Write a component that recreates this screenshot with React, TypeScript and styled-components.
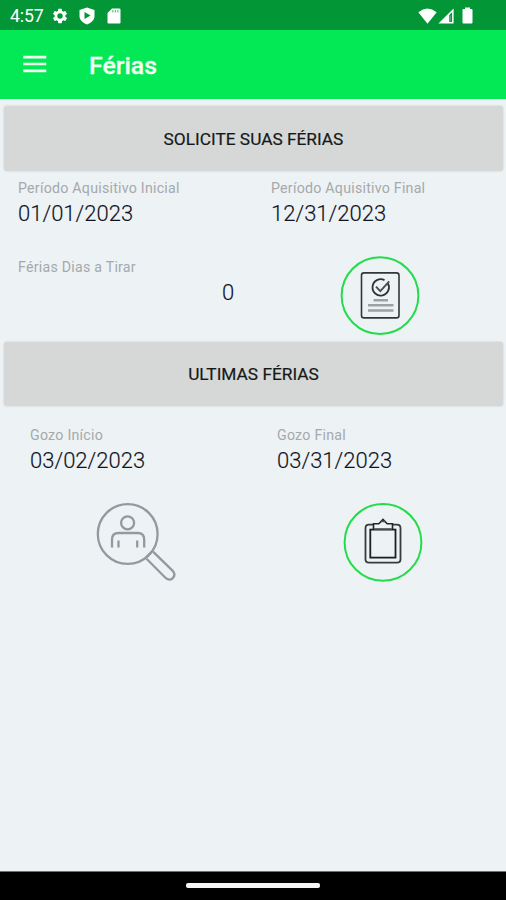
import React from "react";
import styled, { createGlobalStyle } from "styled-components";

const GlobalStyle = createGlobalStyle`
  * { box-sizing: border-box; }
  html, body { margin: 0; padding: 0; }
  body { font-family: Roboto, "Liberation Sans", sans-serif; background: #edf2f5; }
`;

const Screen = styled.div`
  width: 506px;
  height: 900px;
  display: flex;
  flex-direction: column;
  overflow: hidden;
  background: #edf2f5;
`;

const StatusBar = styled.header`
  flex: none;
  height: 30px;
  display: flex;
  align-items: center;
  justify-content: space-between;
  padding: 1px 33px 0 10px;
  background: #029636;
  color: #fff;
`;

const StatusGroup = styled.div<{ $gap: number }>`
  display: flex;
  align-items: center;
  gap: ${(p) => p.$gap}px;
  svg { display: block; }
`;

const Clock = styled.span`
  width: 33px;
  margin-right: -2px;
  font-size: 17.7px;
  line-height: 20px;
  letter-spacing: -0.1px;
  white-space: nowrap;
`;

const AppBar = styled.div`
  flex: none;
  height: 69px;
  display: flex;
  align-items: center;
  gap: 42px;
  padding: 2px 23px 0;
  background: #03e855;
  color: #f3fff2;
`;

const MenuButton = styled.button`
  display: flex;
  width: 24px;
  height: 22px;
  margin-top: -3px;
  padding: 0;
  border: 0;
  background: none;
`;

const Title = styled.h1`
  margin: 0;
  font-size: 24.8px;
  font-weight: 500;
  line-height: 30px;
  -webkit-text-stroke: 0.3px currentColor;
`;

const Content = styled.main`
  flex: 1;
  padding-top: 7px;
`;

const SectionButton = styled.button<{ $height: number }>`
  display: flex;
  align-items: center;
  justify-content: center;
  width: 499px;
  height: ${(p) => p.$height}px;
  margin: 0 0 0 4px;
  padding: 0;
  border: 0;
  border-radius: 3px;
  background: #d6d8d7;
  box-shadow: 0 0 2px rgba(90, 100, 100, 0.3);
  color: #161818;
  font: 400 17.3px/22px Roboto, sans-serif;
  -webkit-text-stroke: 0.2px currentColor;
`;

const FieldRow = styled.div<{ $columns: string; $left: number; $top: number; $height: number }>`
  display: grid;
  grid-template-columns: ${(p) => p.$columns};
  height: ${(p) => p.$height}px;
  padding: ${(p) => p.$top}px 0 0 ${(p) => p.$left}px;
`;

const Label = styled.div`
  height: 20px;
  font-size: 14.2px;
  line-height: 20px;
  letter-spacing: 0.24px;
  color: #a5a9ab;
`;

const Value = styled.div<{ $inset?: boolean }>`
  padding-left: ${(p) => (p.$inset ? "204px" : "0")};
  margin-top: 1px;
  height: 30px;
  font-size: 22px;
  font-weight: 300;
  line-height: 30px;
  color: #10131f;
  -webkit-text-stroke: 0.15px currentColor;
`;

const ActionRow = styled.div`
  display: flex;
  gap: 167px;
  padding: 22px 0 0 96px;
`;

const IconButton = styled.button<{ $lower?: boolean }>`
  width: 80px;
  height: 80px;
  margin-top: ${(p) => (p.$lower ? "1px" : "0")};
  padding: 0;
  border: 0;
  background: none;
  svg { display: block; }
`;

const NavigationBar = styled.footer`
  flex: none;
  height: 29px;
  display: flex;
  justify-content: center;
  align-items: center;
  padding-bottom: 1px;
  border-top: 1px solid #6d7173;
  background: #000;
`;

const HomeHandle = styled.div`
  width: 134px;
  height: 5px;
  border-radius: 2px;
  background: #f4f4f4;
`;

const GearIcon = () => (
  <svg width="18" height="18" viewBox="0 0 24 24" fill="#fff">
    <path d="M19.14 12.94c.04-.3.06-.61.06-.94s-.02-.64-.07-.94l2.03-1.58a.5.5 0 0 0 .12-.61l-1.92-3.32a.49.49 0 0 0-.59-.22l-2.39.96a7 7 0 0 0-1.62-.94l-.36-2.54a.48.48 0 0 0-.48-.41h-3.84a.47.47 0 0 0-.47.41l-.36 2.54c-.59.24-1.13.57-1.62.94l-2.39-.96a.48.48 0 0 0-.59.22L2.740 8.870a.47.47 0 0 0 .12.61l2.030 1.580a7 7 0 0 0 0 1.880l-2.030 1.580a.5.5 0 0 0-.12.61l1.920 3.320c.12.22.37.29.59.22l2.390-.96c.5.38 1.030.7 1.620.94l.36 2.540c.05.24.24.41.48.41h3.840c.24 0 .44-.17.47-.41l.36-2.540a7 7 0 0 0 1.620-.94l2.390.96c.22.08.47 0 .59-.22l1.920-3.320a.47.47 0 0 0-.12-.61zM12 15.600a3.600 3.600 0 1 1 0-7.200 3.600 3.600 0 0 1 0 7.200z" />
  </svg>
);

const ShieldIcon = () => (
  <svg width="16" height="18" viewBox="0 0 16 18">
    <path d="M8 .5 15.500 3v6c0 4-3 6.700-7.500 8.500C3.500 15.700.5 13 .5 9V3z" fill="#fff" />
    <path d="M5.500 4.900v7L11.500 8.400z" fill="#029636" />
  </svg>
);

const SdCardIcon = () => (
  <svg width="17" height="16" viewBox="-2 0 17 16">
    <path d="M5 .5h7.300q1.200 0 1.200 1.200v12.600q0 1.200-1.200 1.200H1.700q-1.200 0-1.200-1.200V5z" fill="#fff" />
    <path d="M5.900 2v2.500M8.400 2v2.500M10.900 2v2.500" stroke="#029636" strokeWidth="1.100" opacity=".65" />
  </svg>
);

const WifiIcon = () => (
  <svg width="19" height="16" viewBox="0 0 19 16">
    <path d="M.3 4.200Q9.500-3.200 18.700 4.200L9.500 15.700z" fill="#fff" />
  </svg>
);

const SignalIcon = () => (
  <svg width="16" height="16" viewBox="0 0 16 16">
    <path fillRule="evenodd" d="M15.600.4v15.200H.4zM11.200 7.100v7h2.900V4.200z" fill="#fff" />
    <path d="M11.900 7.500h1.100v6.300h-1.100z" fill="#fff" opacity=".25" />
  </svg>
);

const BatteryIcon = () => (
  <svg width="11" height="17" viewBox="0 0 11 17">
    <path d="M3 .5h5V2h1.500q1 0 1 1v12.500q0 1-1 1h-8q-1 0-1-1V3q0-1 1-1H3z" fill="#fff" />
  </svg>
);

const MenuIcon = () => (
  <svg width="24" height="22" viewBox="0 0 24 22">
    <path d="M.3 4.200h23M.3 11h23M.3 17.800h23" stroke="#effff0" strokeWidth="2.700" />
  </svg>
);

const Ring = () => <circle cx="40" cy="40" r="38.400" fill="none" stroke="#24dc4b" strokeWidth="2" />;

const RequestIcon = () => (
  <svg width="80" height="80" viewBox="0 0.400 80 80" fill="none">
    <Ring />
    <rect x="21.500" y="17.300" width="37.500" height="45" rx="2.500" stroke="#34373a" strokeWidth="1.600" />
    <path d="M47.600 27.300A8.200 8.200 0 1 1 44.500 24.500" stroke="#303336" strokeWidth="1.800" />
    <path d="m36 31 4.300 4.500 8.900-9.700" stroke="#4b4e50" strokeWidth="1.900" />
    <path d="M33.500 44.600H48M28 49.600h25.500M28 55h25.500" stroke="#9da1a3" strokeWidth="2.500" />
  </svg>
);

const SearchPersonIcon = () => (
  <svg width="80" height="80" viewBox="0 0.500 80 80" fill="none" stroke="#929a9f" strokeWidth="2.300">
    <circle cx="31.700" cy="33.500" r="29.900" />
    <circle cx="31.600" cy="22.300" r="6.500" />
    <path d="M16 47v-8q0-6.500 6.500-6.500h19.200q6.500 0 6.500 6.500v8M22.500 40v7M41.200 40v7" />
    <path d="m50.500 58.300 19.400 19.400c5 4 11-2 7.100-7.100L57 51.100M50.500 56.500l5-5" />
  </svg>
);

const ClipboardIcon = () => (
  <svg width="80" height="80" viewBox="0 -0.400 80 80" fill="none">
    <Ring />
    <path d="M30 22.300h-4q-3.500 0-3.500 3.500v31q0 3.400 3.500 3.400h28q3.500 0 3.500-3.400v-31q0-3.500-3.500-3.500h-4.500" stroke="#383a3b" strokeWidth="1.800" />
    <rect x="27.300" y="27.200" width="25.200" height="28" stroke="#1d1f20" strokeWidth="1.800" />
    <path d="M30.500 26.500v-5.200h5.300l4.200-4.200 4.200 4.200h5.300v5.200" stroke="#232526" strokeWidth="1.600" />
    <path d="M31 26.500h18M38 19h4" stroke="#55585a" strokeWidth="1.500" />
  </svg>
);

const RequestCell = styled.div`
  padding-left: 69px;
  margin-top: -1px;
`;

interface FieldProps {
  label: string;
  value: string;
  inset?: boolean;
}

const Field = ({ label, value, inset }: FieldProps) => (
  <div>
    <Label>{label}</Label>
    <Value $inset={inset}>{value}</Value>
  </div>
);

export default function App() {
  return (
    <>
      <GlobalStyle />
      <Screen>
        <StatusBar>
          <StatusGroup $gap={10}>
            <Clock>4:57</Clock>
            <GearIcon />
            <ShieldIcon />
            <SdCardIcon />
          </StatusGroup>
          <StatusGroup $gap={8}>
            <StatusGroup $gap={1}>
              <WifiIcon />
              <SignalIcon />
            </StatusGroup>
            <BatteryIcon />
          </StatusGroup>
        </StatusBar>
        <AppBar>
          <MenuButton aria-label="Menu"><MenuIcon /></MenuButton>
          <Title>Férias</Title>
        </AppBar>
        <Content>
          <SectionButton $height={65}>SOLICITE SUAS FÉRIAS</SectionButton>
          <FieldRow $columns="253px 1fr" $left={18} $top={7} $height={86}>
            <Field label="Período Aquisitivo Inicial" value="01/01/2023" />
            <Field label="Período Aquisitivo Final" value="12/31/2023" />
          </FieldRow>
          <FieldRow $columns="253px 1fr" $left={18} $top={0} $height={85}>
            <Field label="Férias Dias a Tirar" value="0" inset />
            <RequestCell>
              <IconButton aria-label="Solicitar"><RequestIcon /></IconButton>
            </RequestCell>
          </FieldRow>
          <SectionButton $height={64}>ULTIMAS FÉRIAS</SectionButton>
          <FieldRow $columns="247px 1fr" $left={30} $top={19} $height={73}>
            <Field label="Gozo Início" value="03/02/2023" />
            <Field label="Gozo Final" value="03/31/2023" />
          </FieldRow>
          <ActionRow>
            <IconButton aria-label="Consultar"><SearchPersonIcon /></IconButton>
            <IconButton aria-label="Detalhes" $lower><ClipboardIcon /></IconButton>
          </ActionRow>
        </Content>
        <NavigationBar><HomeHandle /></NavigationBar>
      </Screen>
    </>
  );
}
